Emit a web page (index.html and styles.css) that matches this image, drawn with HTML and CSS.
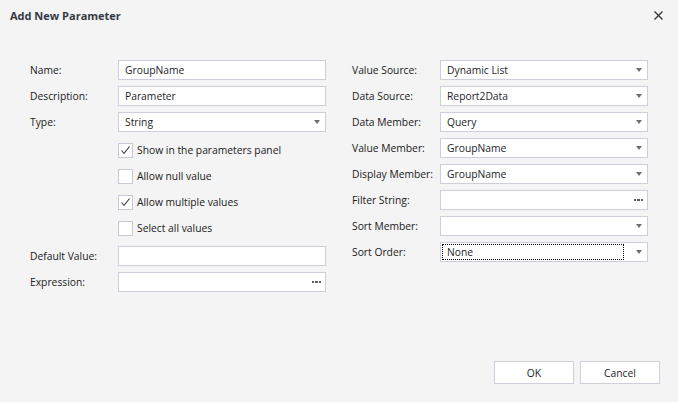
FILE: index.html
```html
<!DOCTYPE html>
<html lang="en">
<head>
<meta charset="utf-8">
<title>Add New Parameter</title>
<link rel="stylesheet" href="styles.css">
</head>
<body>
<div class="dialog">
  <header class="titlebar">
    <span class="title">Add New Parameter</span>
    <span class="close" aria-label="Close">
      <svg width="9" height="9" viewBox="0 0 9 9"><path d="M0.5 0.5 L8.5 8.5 M8.5 0.5 L0.5 8.5" stroke="#3a3a3a" stroke-width="1.4" fill="none"/></svg>
    </span>
  </header>

  <main class="form">
    <section class="col">
      <div class="row"><label class="lbl">Name:</label><div class="field"><span class="val">GroupName</span></div></div>
      <div class="row"><label class="lbl">Description:</label><div class="field"><span class="val">Parameter</span></div></div>
      <div class="row"><label class="lbl">Type:</label><div class="field"><span class="val">String</span><span class="arrow"></span></div></div>
      <div class="checks">
        <div class="check-row"><span class="box"><svg width="13" height="13" viewBox="0 0 13 13"><path d="M2.5 6.5 L5 9.5 L10.5 2.5" stroke="#333" stroke-width="1.1" fill="none"/></svg></span><span>Show in the parameters panel</span></div>
        <div class="check-row"><span class="box"></span><span>Allow null value</span></div>
        <div class="check-row"><span class="box"><svg width="13" height="13" viewBox="0 0 13 13"><path d="M2.5 6.5 L5 9.5 L10.5 2.5" stroke="#333" stroke-width="1.1" fill="none"/></svg></span><span>Allow multiple values</span></div>
        <div class="check-row"><span class="box"></span><span>Select all values</span></div>
      </div>
      <div class="row"><label class="lbl">Default Value:</label><div class="field"><span class="val"></span></div></div>
      <div class="row"><label class="lbl">Expression:</label><div class="field"><span class="val"></span><span class="dots"><i></i><i></i><i></i></span></div></div>
    </section>

    <section class="col">
      <div class="row"><label class="lbl">Value Source:</label><div class="field"><span class="val">Dynamic List</span><span class="arrow"></span></div></div>
      <div class="row"><label class="lbl">Data Source:</label><div class="field"><span class="val">Report2Data</span><span class="arrow"></span></div></div>
      <div class="row"><label class="lbl">Data Member:</label><div class="field"><span class="val">Query</span><span class="arrow"></span></div></div>
      <div class="row"><label class="lbl">Value Member:</label><div class="field"><span class="val">GroupName</span><span class="arrow"></span></div></div>
      <div class="row"><label class="lbl">Display Member:</label><div class="field"><span class="val">GroupName</span><span class="arrow"></span></div></div>
      <div class="row"><label class="lbl">Filter String:</label><div class="field"><span class="val"></span><span class="dots"><i></i><i></i><i></i></span></div></div>
      <div class="row"><label class="lbl">Sort Member:</label><div class="field"><span class="val"></span><span class="arrow"></span></div></div>
      <div class="row"><label class="lbl">Sort Order:</label><div class="field"><span class="val focus">None</span><span class="arrow"></span></div></div>
    </section>
  </main>

  <footer class="buttons">
    <button class="btn">OK</button>
    <button class="btn">Cancel</button>
  </footer>
</div>
</body>
</html>
```

FILE: styles.css
```css
* { box-sizing: border-box; }

html, body {
  margin: 0;
  padding: 0;
  height: 100%;
}

body {
  background: #f4f4f4;
  font-family: "Open Sans", "Liberation Sans", sans-serif;
  font-size: 10.3px;
  color: #202020;
}

.dialog {
  display: flex;
  flex-direction: column;
  height: 100vh;
}

.titlebar {
  height: 30px;
  display: flex;
  align-items: center;
  justify-content: space-between;
  padding: 0 15px 0 10px;
}

.title {
  font-weight: bold;
  font-size: 11px;
  color: #333a44;
}

.close {
  display: flex;
  width: 9px;
  height: 9px;
}

.form {
  flex: 1;
  display: flex;
  gap: 26px;
  padding: 30px 0 0 30px;
  align-items: flex-start;
}

.col {
  display: flex;
  flex-direction: column;
  gap: 6px;
}

.row {
  display: grid;
  grid-template-columns: 88px 208px;
  height: 20px;
  align-items: center;
}

.lbl {
  white-space: nowrap;
  line-height: 18px;
}

.field {
  height: 20px;
  background: #ffffff;
  border: 1px solid #cfcfdc;
  display: flex;
  align-items: center;
  padding: 0 4px 0 1px;
}

.val {
  flex: 1;
  height: 16px;
  line-height: 14px;
  padding-left: 4px;
  color: #1e1e28;
  border: 1px solid transparent;
}

.val.focus {
  border: 1px dotted #000;
  margin-right: 12px;
}

.arrow {
  width: 0;
  height: 0;
  border-left: 3.5px solid transparent;
  border-right: 3.5px solid transparent;
  border-top: 4px solid #6e6e6e;
  margin-right: 1px;
}

.dots {
  display: flex;
  gap: 1px;
}

.dots i {
  display: block;
  width: 2.5px;
  height: 2.5px;
  background: #5e5e5e;
}

.checks {
  display: flex;
  flex-direction: column;
  gap: 10px;
  padding: 4px 0 4px 88px;
}

.check-row {
  display: flex;
  align-items: center;
  height: 16px;
  gap: 4px;
  line-height: 14px;
}

.box {
  width: 15px;
  height: 15px;
  border: 1px solid #c8c8d6;
  background: #ffffff;
  display: flex;
  align-items: center;
  justify-content: center;
}

.buttons {
  display: flex;
  justify-content: flex-end;
  gap: 6px;
  padding: 0 18px 18px 0;
}

.btn {
  width: 80px;
  height: 23px;
  background: #ffffff;
  border: 1px solid #cfcfdc;
  font-family: inherit;
  font-size: 10.3px;
  color: #1e1e28;
  padding: 0;
}
```
